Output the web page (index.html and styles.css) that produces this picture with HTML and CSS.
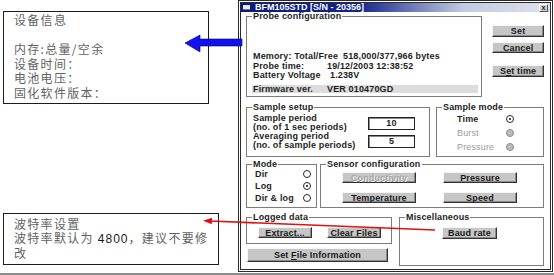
FILE: index.html
```html
<!DOCTYPE html>
<html lang="zh">
<head>
<meta charset="utf-8">
<title>BFM105STD</title>
<link rel="stylesheet" href="styles.css">
</head>
<body>
<div class="page">
  <div class="notes">
    <div class="note note-info">
      <div>设备信息</div>
      <div>&nbsp;</div>
      <div>内存:总量/空余</div>
      <div>设备时间：</div>
      <div>电池电压：</div>
      <div>固化软件版本：</div>
    </div>
    <div class="note note-baud">
      <div>波特率设置</div>
      <div>波特率默认为 <span class="num">4800</span>，建议不要修<br>改</div>
    </div>
  </div>

  <div class="window">
    <div class="titlebar">
      <span class="sysicon"></span>
      <span class="title">BFM105STD [S/N - 20356]</span>
      <span class="closebox">x</span>
    </div>
    <div class="client">
      <div class="row row-1">
        <fieldset class="group probe">
          <legend>Probe configuration</legend>
          <div class="probe-lines">
            <div class="line">Memory: Total/Free<span class="mem">518,000/377,966 bytes</span></div>
            <div class="line"><span class="k">Probe time:</span><span>19/12/2003 12:38:52</span></div>
            <div class="line"><span class="k">Battery Voltage</span><span class="v-batt">1.238V</span></div>
            <div class="firmware"><span class="fw-k">Firmware ver.</span><span>VER 010470GD</span></div>
          </div>
        </fieldset>
        <div class="side-buttons">
          <button class="btn btn-set">Set</button>
          <button class="btn btn-cancel">Cancel</button>
          <button class="btn btn-settime">S<u>e</u>t time</button>
        </div>
      </div>

      <div class="row row-2">
        <fieldset class="group setup">
          <legend>Sample setup</legend>
          <div class="setup-grid">
            <div class="setup-label">Sample period<br>(no. of 1 sec periods)</div>
            <div class="field">10</div>
            <div class="setup-label">Averaging period<br>(no. of sample periods)</div>
            <div class="field">5</div>
          </div>
        </fieldset>
        <fieldset class="group sample-mode">
          <legend>Sample mode</legend>
          <div class="radio-grid">
            <span class="opt">Time</span><span class="radio on"></span>
            <span class="opt disabled">Burst</span><span class="radio off"></span>
            <span class="opt disabled">Pressure</span><span class="radio off"></span>
          </div>
        </fieldset>
      </div>

      <div class="row row-3">
        <fieldset class="group mode">
          <legend>Mode</legend>
          <div class="radio-grid">
            <span class="opt">Dir</span><span class="radio"></span>
            <span class="opt">Log</span><span class="radio on"></span>
            <span class="opt">Dir &amp; log</span><span class="radio"></span>
          </div>
        </fieldset>
        <fieldset class="group sensor">
          <legend>Sensor configuration</legend>
          <div class="sensor-grid">
            <button class="btn btn-disabled">Conductivity</button>
            <button class="btn"><u>P</u>ressure</button>
            <button class="btn"><u>T</u>emperature</button>
            <button class="btn"><u>S</u>peed</button>
          </div>
        </fieldset>
      </div>

      <div class="row row-4">
        <div class="left-stack">
          <fieldset class="group logged">
            <legend>Logged data</legend>
            <div class="btn-row">
              <button class="btn btn-small"><u>E</u>xtract...</button>
              <button class="btn btn-small">Clear Files</button>
            </div>
          </fieldset>
          <button class="btn btn-file">Set <u>F</u>ile Information</button>
        </div>
        <fieldset class="group misc">
          <legend>Miscellaneous</legend>
          <div class="misc-body">
            <button class="btn btn-baud">Baud rate</button>
          </div>
        </fieldset>
      </div>
    </div>
  </div>
</div>

<svg class="overlay" width="554" height="275" viewBox="0 0 554 275" aria-hidden="true">
  <polygon points="185,43 200,35 200,39 242,39 242,46 200,46 200,52" fill="#1212f0" stroke="#00006a" stroke-width="0.6"/>
  <line x1="210" y1="221" x2="435" y2="230" stroke="#e01010" stroke-width="1.6"/>
  <polygon points="203,220.7 212,217.8 211.8,224.2" fill="#e01010"/>
</svg>
</body>
</html>
```

FILE: styles.css
```css
* { box-sizing: border-box; }

html, body {
  margin: 0;
  padding: 0;
}

body {
  width: 554px;
  height: 275px;
  background: #fff;
  position: relative;
  overflow: hidden;
  font-family: "Liberation Sans", Arial, sans-serif;
}

.page {
  display: flex;
  height: 275px;
  border-bottom: 2px solid #8c8c8c;
}

/* ---------- left annotation boxes ---------- */
.notes {
  width: 238px;
  display: flex;
  flex-direction: column;
}

.note {
  margin-left: 3px;
  border: 1px solid #1c1c1c;
  padding-left: 10px;
  font-family: "Noto Sans CJK SC", "Noto Sans CJK JP", sans-serif;
  font-size: 12px;
  letter-spacing: 1.3px;
  color: #626262;
  white-space: nowrap;
}

.note-info {
  margin-top: 11px;
  width: 206px;
  height: 93px;
  padding-top: 1px;
  line-height: 14.5px;
}

.note-baud {
  margin-top: 109px;
  width: 216px;
  height: 52px;
  padding-top: 3px;
  line-height: 13.5px;
}

.num {
  font-family: "Liberation Sans", Arial, sans-serif;
  color: #1a1a1a;
  letter-spacing: 1px;
}

/* ---------- window ---------- */
.window {
  width: 315px;
  height: 272px;
  border: 3px double #2a2a2a;
  display: flex;
  flex-direction: column;
  background: #fff;
}

.titlebar {
  height: 9px;
  display: flex;
  align-items: center;
  background: linear-gradient(to right, #0c1a7c 0%, #14258a 38%, #c2cbe2 72%, #dde1ec 100%);
  color: #fff;
  font: bold 9px/9px "Liberation Sans", Arial, sans-serif;
}

.sysicon {
  width: 7px;
  height: 5px;
  margin-left: 2px;
  background: #e6e6e6;
  border-bottom: 1px solid #777;
}

.title {
  margin-left: 5px;
  white-space: nowrap;
}

.closebox {
  margin-left: auto;
  margin-right: 2px;
  width: 9px;
  height: 8px;
  background: #d0d0d0;
  border: 1px solid;
  border-color: #fff #555 #555 #fff;
  color: #222;
  font-size: 7px;
  line-height: 5px;
  text-align: center;
}

.client {
  flex: 1;
  padding: 0 6px 0 5px;
  font: bold 9px/8px "Liberation Sans", Arial, sans-serif;
  letter-spacing: 0.15px;
  color: #1e1e1e;
}

.row {
  display: flex;
  align-items: flex-start;
}

.row-2 { margin-top: 6px; }
.row-3 { margin-top: 3px; }
.row-4 { margin-top: 5px; }

/* group boxes */
.group {
  margin: 0;
  padding: 0;
  border: 1px solid #7c7c7c;
  min-width: 0;
}

.group > legend {
  margin-left: 5px;
  padding: 0 1px;
  font: bold 9px/8px "Liberation Sans", Arial, sans-serif;
  letter-spacing: 0.15px;
  color: #1e1e1e;
}

/* buttons */
.btn {
  display: block;
  padding: 0;
  margin: 0;
  background: #c6c6c6;
  border: 1px solid;
  border-color: #f6f6f6 #333 #333 #f6f6f6;
  box-shadow: inset -1px -1px #8a8a8a;
  font: bold 9px/8px "Liberation Sans", Arial, sans-serif;
  letter-spacing: 0.15px;
  color: #1a1a1a;
  text-align: center;
  white-space: nowrap;
  overflow: hidden;
}

.btn-disabled {
  color: #a6a6a6;
  text-shadow: 1px 1px #f0f0f0;
}

/* probe configuration */
.probe {
  width: 237px;
  height: 85px;
}

.probe-lines {
  padding: 32px 0 0 6px;
}

.line {
  height: 9.5px;
  line-height: 9.5px;
  white-space: nowrap;
}

.mem { margin-left: 5px; }

.k {
  display: inline-block;
  width: 74px;
}

.v-batt { margin-left: 3px; }

.firmware {
  margin: 4px 0 0 -1px;
  width: 226px;
  height: 8px;
  line-height: 8px;
  display: flex;
  background: #dcdcdc;
  white-space: nowrap;
}

.fw-k {
  width: 75px;
  padding-left: 1px;
}

.side-buttons {
  margin-left: 10px;
  width: 52px;
  padding-top: 13px;
  display: flex;
  flex-direction: column;
}

.btn-set { height: 12px; }
.btn-cancel { height: 11px; margin-top: 5px; }
.btn-settime { height: 12px; margin-top: 12px; }

/* sample setup */
.setup {
  width: 184px;
  height: 54px;
}

.setup-grid {
  display: grid;
  grid-template-columns: 115px 47px;
  grid-auto-rows: 18px;
  align-items: center;
  padding: 3px 0 0 6px;
}

.setup-label {
  line-height: 9px;
  white-space: nowrap;
}

.field {
  height: 13px;
  border: 1px solid #222;
  box-shadow: inset 1px 1px #8a8a8a;
  background: #fff;
  text-align: center;
  line-height: 10px;
}

/* radios */
.sample-mode {
  margin-left: 6px;
  width: 108px;
  height: 54px;
}

.radio-grid {
  display: grid;
  grid-template-columns: 49px 8px;
  grid-auto-rows: 14px;
  align-items: center;
  padding: 1px 0 0 20px;
}

.opt { white-space: nowrap; }

.opt.disabled {
  color: #9c9c9c;
  font-weight: normal;
}

.radio {
  position: relative;
  width: 8px;
  height: 8px;
  border-radius: 50%;
  border: 1px solid #2a2a2a;
  background: #fff;
}

.radio.on::after {
  content: "";
  position: absolute;
  left: 2px;
  top: 2px;
  width: 2px;
  height: 2px;
  border-radius: 50%;
  background: #111;
}

.radio.off {
  background: #bcbcbc;
  border-color: #8a8a8a;
}

/* mode */
.mode {
  width: 71px;
  height: 48px;
}

.mode .radio-grid {
  grid-template-columns: 48px 8px;
  grid-auto-rows: 12px;
  padding: 0 0 0 8px;
}

/* sensor configuration */
.sensor {
  margin-left: 3px;
  width: 224px;
  height: 48px;
}

.sensor-grid {
  display: grid;
  grid-template-columns: 74px 74px;
  grid-auto-rows: 11px;
  column-gap: 27px;
  row-gap: 9px;
  padding: 4px 0 0 21px;
}

/* logged data */
.left-stack {
  width: 146px;
  display: flex;
  flex-direction: column;
}

.logged {
  width: 146px;
  height: 31px;
}

.btn-row {
  display: flex;
  gap: 15px;
  padding: 6px 0 0 11px;
}

.btn-small {
  width: 54px;
  height: 11px;
}

.btn-file {
  margin: 4px 0 0 1px;
  width: 141px;
  height: 14px;
}

/* miscellaneous */
.misc {
  margin-left: 7px;
  width: 145px;
  height: 53px;
}

.misc-body {
  padding: 6px 0 0 42px;
}

.btn-baud {
  width: 55px;
  height: 12px;
}

/* annotation arrows */
.overlay {
  position: absolute;
  left: 0;
  top: 0;
  pointer-events: none;
}
```
